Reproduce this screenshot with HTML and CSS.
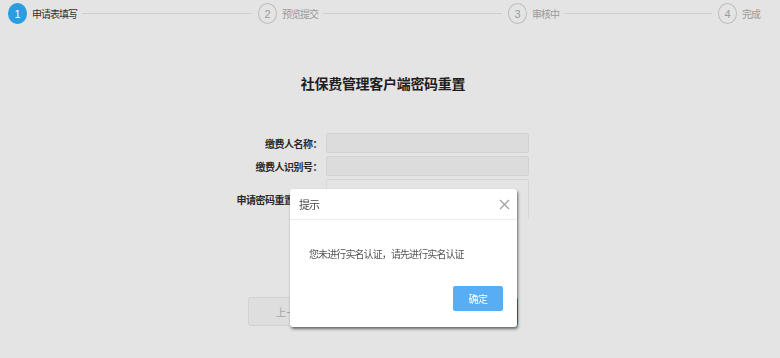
FILE: index.html
```html
<!DOCTYPE html>
<html lang="zh-CN">
<head>
    <meta charset="UTF-8">
    <meta name="viewport" content="width=device-width, initial-scale=1.0">
    <title>社保费管理客户端密码重置</title>
    <link rel="stylesheet" href="styles.css">
</head>
<body>
    <!-- 步骤条 -->
    <div class="steps">
        <div class="step active">
            <span class="step-num">1</span>
            <span class="step-label">申请表填写</span>
            <span class="step-line"></span>
        </div>
        <div class="step">
            <span class="step-num">2</span>
            <span class="step-label">预览提交</span>
            <span class="step-line"></span>
        </div>
        <div class="step">
            <span class="step-num">3</span>
            <span class="step-label">审核中</span>
            <span class="step-line"></span>
        </div>
        <div class="step">
            <span class="step-num">4</span>
            <span class="step-label">完成</span>
        </div>
    </div>

    <!-- 表单 -->
    <div class="main">
        <h1 class="page-title">社保费管理客户端密码重置</h1>
        <div class="form">
            <label class="form-label">缴费人名称：</label>
            <div class="form-input disabled"></div>
            <label class="form-label">缴费人识别号：</label>
            <div class="form-input disabled"></div>
            <label class="form-label">申请密码重置原因：</label>
            <div class="form-textarea"></div>
        </div>
        <div class="actions">
            <button class="btn btn-prev">上一步</button>
            <button class="btn btn-next">下一步</button>
        </div>
    </div>

    <!-- 提示框 -->
    <div class="modal">
        <div class="modal-header">
            <span class="modal-title">提示</span>
            <svg class="modal-close" width="11" height="11" viewBox="0 0 11 11">
                <path d="M1 1 L10 10 M10 1 L1 10" stroke="#a0a0a0" stroke-width="1.2" fill="none"/>
            </svg>
        </div>
        <div class="modal-body">
            <p class="modal-text">您未进行实名认证，请先进行实名认证</p>
            <div class="modal-footer">
                <button class="modal-btn">确定</button>
            </div>
        </div>
    </div>
</body>
</html>
```

FILE: styles.css
```css
body {
    margin: 0;
    background-color: #e4e4e4;
    font-family: "Noto Sans CJK SC", "Noto Sans", sans-serif;
    color: #333;
}

/* 步骤条 */
.steps {
    display: grid;
    grid-template-columns: 250px 250px 210px auto;
    align-items: center;
    height: 27px;
    padding-left: 8px;
}

.step {
    display: flex;
    align-items: center;
}

.step-num {
    box-sizing: border-box;
    width: 19px;
    height: 21px;
    border: 1px solid #bdbdbd;
    border-radius: 50%;
    display: flex;
    align-items: center;
    justify-content: center;
    font-size: 11px;
    color: #9a9a9a;
    font-family: "Liberation Sans", sans-serif;
}

.step-label {
    margin-left: 5px;
    font-size: 10px;
    letter-spacing: -1px;
    color: #9a9a9a;
    white-space: nowrap;
}

.step-line {
    flex: 1;
    height: 1px;
    background-color: #cfcfcf;
    margin: 0 6px 0 5px;
}

.step.active .step-num {
    background-color: #2a9de0;
    border-color: #2a9de0;
    color: #fff;
}

.step.active .step-label {
    color: #333;
}

/* 表单 */
.main {
    padding-top: 46px;
}

.page-title {
    margin: 0;
    padding-right: 14px;
    text-align: center;
    font-size: 14px;
    line-height: 21px;
    letter-spacing: -0.3px;
    font-weight: bold;
    color: #1e1e1e;
}

.form {
    display: grid;
    grid-template-columns: 122px 203px;
    column-gap: 4px;
    row-gap: 3px;
    margin: 39px 0 0 200px;
    align-items: center;
}

.form-label {
    text-align: right;
    font-size: 10px;
    font-weight: bold;
    letter-spacing: -0.5px;
    color: #2a2a2a;
    white-space: nowrap;
}

.form-input {
    box-sizing: border-box;
    height: 20px;
    border: 1px solid #d2d2d2;
    border-radius: 2px;
}

.form-input.disabled {
    background-color: #dcdcdc;
}

.form-textarea {
    box-sizing: border-box;
    height: 40px;
    border: 1px solid #d6d6d6;
    border-bottom-color: #e4e4e4;
    border-radius: 2px;
    background-color: #e4e4e4;
}

.actions {
    display: flex;
    gap: 94px;
    margin: 78px 0 0 248px;
}

.btn {
    width: 88px;
    height: 29px;
    border-radius: 3px;
    font-size: 11px;
    font-family: inherit;
}

.btn-prev {
    background-color: #dedede;
    border: 1px solid #d2d2d2;
    color: #a8a8a8;
}

.btn-next {
    background-color: #3f86c8;
    border: 1px solid #3f86c8;
    color: #fff;
}

/* 提示框 */
.modal {
    position: fixed;
    left: 290px;
    top: 189px;
    width: 227px;
    background-color: #fff;
    border-radius: 3px;
    box-shadow: 1px 2px 3px rgba(0, 0, 0, 0.55);
}

.modal-header {
    display: flex;
    align-items: center;
    justify-content: space-between;
    height: 30px;
    padding: 0 7px 0 9px;
    border-bottom: 1px solid #ececec;
}

.modal-title {
    font-size: 11px;
    letter-spacing: -1px;
    color: #444;
}

.modal-body {
    padding: 28px 14px 16px 19px;
}

.modal-text {
    margin: 0;
    font-size: 10px;
    line-height: 12px;
    letter-spacing: -0.9px;
    color: #555;
    white-space: nowrap;
}

.modal-footer {
    display: flex;
    justify-content: flex-end;
    margin-top: 26px;
}

.modal-btn {
    width: 50px;
    height: 25px;
    border: none;
    border-radius: 2px;
    background-color: #57aef4;
    color: #fff;
    font-size: 10px;
    letter-spacing: -0.5px;
    font-family: inherit;
}
```
